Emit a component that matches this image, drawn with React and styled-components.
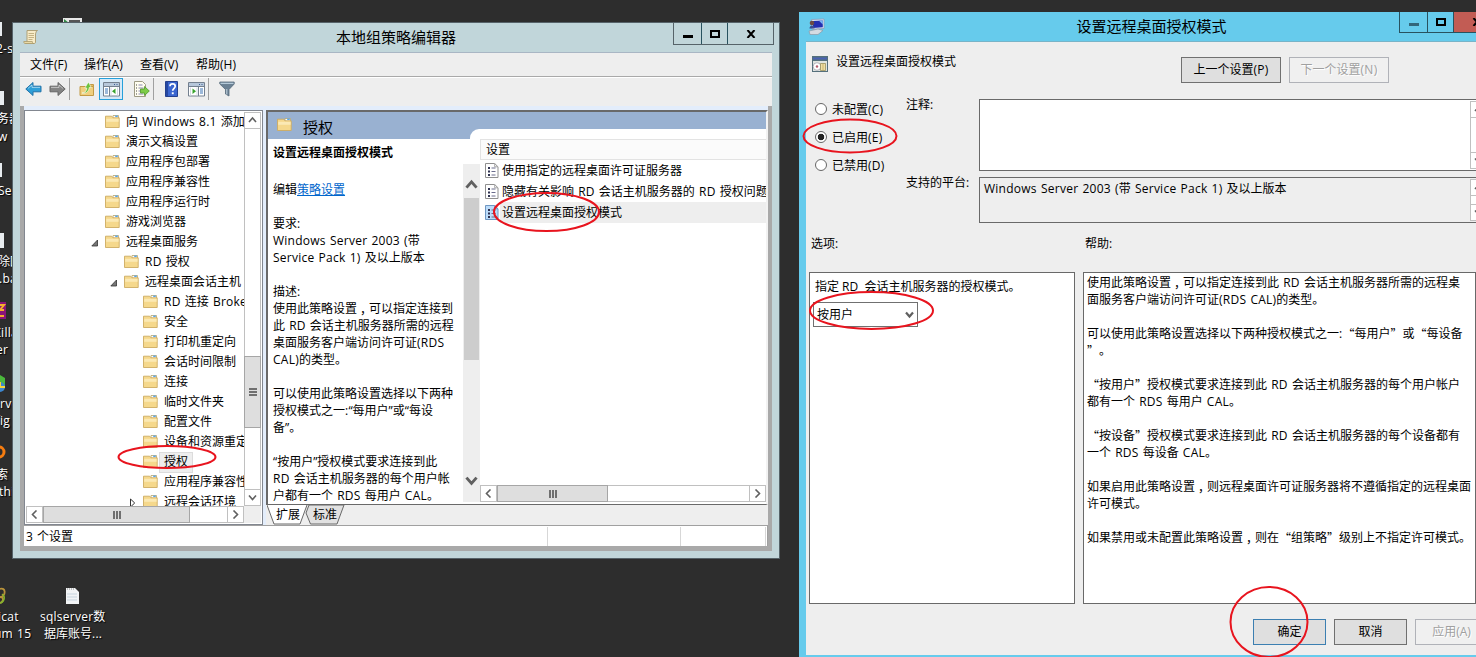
import React from "react";
import styled, { createGlobalStyle, css } from "styled-components";

const FONT = "\"Open Sans\", \"Noto Sans CJK SC\", sans-serif";

const GlobalStyle = createGlobalStyle`
* { box-sizing: border-box; }
body {
  margin: 0;
  overflow: hidden;
  background: #2d2d2d;
  font: 12px/17px ${ FONT };
  word-spacing: 1px;
  color: #000;
}
`;

/* ---------- data ---------- */

const MENUS = [ "文件(F)", "操作(A)", "查看(V)", "帮助(H)" ];

const TREE = [
  { level: 0, label: "向 Windows 8.1 添加功能" },
  { level: 0, label: "演示文稿设置" },
  { level: 0, label: "应用程序包部署" },
  { level: 0, label: "应用程序兼容性" },
  { level: 0, label: "应用程序运行时" },
  { level: 0, label: "游戏浏览器" },
  { level: 0, label: "远程桌面服务", arrow: "open" },
  { level: 1, label: "RD 授权" },
  { level: 1, label: "远程桌面会话主机", arrow: "open" },
  { level: 2, label: "RD 连接 Broker" },
  { level: 2, label: "安全" },
  { level: 2, label: "打印机重定向" },
  { level: 2, label: "会话时间限制" },
  { level: 2, label: "连接" },
  { level: 2, label: "临时文件夹" },
  { level: 2, label: "配置文件" },
  { level: 2, label: "设备和资源重定向" },
  { level: 2, label: "授权", selected: true },
  { level: 2, label: "应用程序兼容性" },
  { level: 2, label: "远程会话环境", arrow: "closed" },
];

const POLICIES = [
  { label: "使用指定的远程桌面许可证服务器" },
  { label: "隐藏有关影响 RD 会话主机服务器的 RD 授权问题" },
  { label: "设置远程桌面授权模式", selected: true },
];

const DESCRIPTION = [
  "要求:",
  "Windows Server 2003 (带",
  "Service Pack 1) 及以上版本",
  "",
  "描述:",
  "使用此策略设置，可以指定连接到",
  "此 RD 会话主机服务器所需的远程",
  "桌面服务客户端访问许可证(RDS",
  "CAL)的类型。",
  "",
  "可以使用此策略设置选择以下两种",
  "授权模式之一:“每用户”或“每设",
  "备”。",
  "",
  "“按用户”授权模式要求连接到此",
  "RD 会话主机服务器的每个用户帐",
  "户都有一个 RDS 每用户 CAL。",
];

const HELP = [
  "使用此策略设置，可以指定连接到此 RD 会话主机服务器所需的远程桌",
  "面服务客户端访问许可证(RDS CAL)的类型。",
  "",
  "可以使用此策略设置选择以下两种授权模式之一:“每用户”或“每设备",
  "”。",
  "",
  "“按用户”授权模式要求连接到此 RD 会话主机服务器的每个用户帐户",
  "都有一个 RDS 每用户 CAL。",
  "",
  "“按设备”授权模式要求连接到此 RD 会话主机服务器的每个设备都有",
  "一个 RDS 每设备 CAL。",
  "",
  "如果启用此策略设置，则远程桌面许可证服务器将不遵循指定的远程桌面",
  "许可模式。",
  "",
  "如果禁用或未配置此策略设置，则在“组策略”级别上不指定许可模式。",
];

const DESKTOP_LABELS = [
  { x: -4, y: 40, text: "2-s" },
  { x: -3, y: 110, text: "务器" },
  { x: -2, y: 128, text: "w ）" },
  { x: -2, y: 182, text: "Sea" },
  { x: -2, y: 253, text: "除回" },
  { x: -1, y: 270, text: ".bat" },
  { x: -6, y: 324, text: "Zilla" },
  { x: -4, y: 341, text: "er" },
  { x: -7, y: 395, text: "erver" },
  { x: -12, y: 412, text: "nfig" },
  { x: -4, y: 466, text: "索" },
  { x: -1, y: 483, text: "thi" },
  { x: -2, y: 608, text: "icat" },
  { x: -6, y: 625, text: "um 15" },
  { x: 40, y: 608, text: "sqlserver数" },
  { x: 44, y: 625, text: "据库账号..." },
];

const MARKS = [
  { cx: 167, cy: 457, rx: 48.5, ry: 11 },
  { cx: 546.5, cy: 212, rx: 52.5, ry: 19 },
  { cx: 850, cy: 136, rx: 46.5, ry: 16.5 },
  { cx: 871.5, cy: 310.5, rx: 61.5, ry: 18.5 },
  { cx: 1269, cy: 622, rx: 38.5, ry: 35 },
];

/* ---------- icons ---------- */

const FolderIcon = () => (
  <svg width="15" height="14" viewBox="0 0 15 14">
    <path d="M8 1.500h5.500v3H8z" fill="#fff" stroke="#b9a46a" strokeWidth=".8"/>
    <path d="M.5 2.200h6.200l1.300 1.600h6.200v9.700H.5z" fill="#f5d88c" stroke="#cdab62" strokeWidth=".9"/>
    <path d="M1.200 4.800h12.400v3H1.200z" fill="#fbe9b4"/>
    <path d="M10.200 1.500h2.600V3h-2.600z" fill="#5aa5e6"/>
  </svg>
);

const PolicyIcon = ( { selected } ) => (
  <svg width="14" height="15" viewBox="0 0 14 15">
    <path d="M.5.5h9.200l3.300 3.300v10.700H.5z" fill={ selected ? "#bcdcfa" : "#fff" }
          stroke={ selected ? "#6f97c2" : "#8f8f8f" }/>
    <path d="M9.700.5v3.300H13" fill="none" stroke={ selected ? "#6f97c2" : "#a5a5a5" }/>
    <path d="M3 4h2v2H3zM3 7.500h2v2H3zM3 11h2v2H3z" fill="#2f3250"/>
    <path d="M6.500 5h4M6.500 8.500h4M6.500 12h4" stroke="#6a6c8c"/>
  </svg>
);

const ArrowIcon = ( { flip, fill, stroke } ) => (
  <svg width="17" height="16" viewBox="0 0 17 16">
    <g transform={ flip ? "translate(17 0) scale(-1 1)" : undefined }>
      <path d="M.8 8l7.200-6.500v3.700h8v5.600H8v3.700z" fill={ fill } stroke={ stroke }/>
      <path d="M3 7.400l4-3.400v2.400h8" fill="none" stroke="#fff" strokeOpacity=".5"/>
    </g>
  </svg>
);

const FolderUpIcon = () => (
  <svg width="16" height="16" viewBox="0 0 16 16">
    <path d="M1 5.500h13.500v9H1z" fill="#f0cf7e" stroke="#c29a45"/>
    <path d="M9 3.500h5.500v2H9z" fill="#e3bd66" stroke="#c29a45"/>
    <path d="M3 12c3 0 4.500-2 4.800-5h-2L9.500 1l2.700 5.500h-2C10 10 7.500 13 3 12z" fill="#6dc23c" stroke="#fff"
          strokeWidth=".6"/>
  </svg>
);

const PaneIcon = ( { flip } ) => (
  <svg width="17" height="15" viewBox="0 0 17 15">
    <path d="M.5.5h16v13.500H.5z" fill="#fff" stroke="#74808f"/>
    <path d="M1 1h15v3H1z" fill="#b7c7da"/>
    <path d="M11 2.500h1M13.500 2.500h1" stroke="#3b5f94"/>
    <g transform={ flip ? "translate(17 0) scale(-1 1)" : undefined }>
      <path d="M1 4.500h15M6.500 5v9" stroke="#74808f"/>
      <path d="M2 7h3M2 9h3M2 11h3" stroke="#3b72b4"/>
      <path d="M12.500 6.500v5.500L9 9.200z" fill="#38a32d"/>
      <path d="M8 5.500v8M14.500 5.500v8" stroke="#d3dae3"/>
    </g>
  </svg>
);

const ExportIcon = () => (
  <svg width="17" height="16" viewBox="0 0 17 16">
    <path d="M1.500.5h8l3 3v12h-11z" fill="#fffdf0" stroke="#9d9a84"/>
    <path d="M3 4h1M3 7h1M3 10h1M3 13h1" stroke="#444"/>
    <path d="M5.500 4h4M5.500 7h5M5.500 10h3M5.500 13h5" stroke="#8888b5"/>
    <path d="M7.500 8h4V5.500L16.300 10l-4.800 4.500V12h-4z" fill="#7dcc48" stroke="#51982a" strokeWidth=".8"/>
  </svg>
);

const HelpIcon = () => (
  <svg width="14" height="16" viewBox="0 0 14 16">
    <path d="M.5.5h12v15H.5z" fill="#3b66d0" stroke="#24408e"/>
    <path d="M1 1h2v14H1z" fill="#2648a2"/>
    <path d="M5 5.200c0-3 5.200-3 5.200 0 0 2-2.500 2.200-2.500 4.600" fill="none" stroke="#fff" strokeWidth="1.700"/>
    <path d="M6.800 11.300h1.900v1.900H6.800z" fill="#fff"/>
  </svg>
);

const FunnelIcon = () => (
  <svg width="16" height="16" viewBox="0 0 16 16">
    <path d="M.8 1h14.400v2L10 8.500V15l-3.500-2V8.500L.8 3z" fill="#6b8194" stroke="#566a7b" strokeWidth=".8"/>
    <path d="M1.500 2.300h13" stroke="#c8dcea"/>
    <path d="M7.800 8v5.500" stroke="#c2d3df"/>
  </svg>
);

const ScrollDocIcon = () => (
  <svg width="16" height="16" viewBox="0 0 16 16">
    <path d="M4 1.500h10.500c-1.500 0-1.500 2.500-2 3.500v8c0 1-.5 1.500-1.500 1.500H2.500c1.500 0 1.500-1 1.500-2z" fill="#f8ecc8"
          stroke="#a99a6c" strokeWidth=".9"/>
    <path d="M.8 12.500h8.500c0 1 .5 2 1.500 2H2c-1 0-1.200-1-1.200-2z" fill="#e9d9a6" stroke="#a99a6c" strokeWidth=".8"/>
    <path d="M5.500 4.500h5.500M5.500 6.500h5.500M5.500 8.500h5.500M5.500 10.500h4" stroke="#b6a472" strokeWidth=".8"/>
  </svg>
);

const MonitorIcon = () => (
  <svg width="18" height="17" viewBox="0 0 18 17">
    <path d="M3.500 1.500L16 1v9.500l-12 .8z" fill="#dce6f4" stroke="#8b9cb8" strokeWidth=".8"/>
    <path d="M5 3l9.800-.5v6.800L5 10z" fill="#2330b0"/>
    <path d="M11 2.700l3.800-.2v4z" fill="#7ab4f4"/>
    <path d="M1 13l9-2 5 1.500-5 4H2z" fill="#d5dbe2" stroke="#8d99a6" strokeWidth=".7"/>
    <circle cx="4" cy="5" r="2.300" fill="#6c4b44"/>
    <path d="M1.500 10.500c0-4 5-4 5 0z" fill="#3a4f94"/>
  </svg>
);

const SettingIcon = () => (
  <svg width="16" height="16" viewBox="0 0 16 16">
    <path d="M0 0h16v16H0z" fill="#55707c"/>
    <path d="M1 1.500h14v2H1z" fill="#4a62b4"/>
    <path d="M1 5h14v10H1z" fill="#dfe4e0"/>
    <circle cx="5" cy="10.500" r="3.800" fill="#fff" stroke="#9a9aa8" strokeWidth=".7"/>
    <circle cx="5" cy="10.500" r="1.200" fill="#b45a6c"/>
    <path d="M8.500 7.500h5v7h-5z" fill="#fff4c0" stroke="#8e8248" strokeWidth=".7"/>
    <path d="M9.500 9h3M9.500 11h3M9.500 13h3" stroke="#a88c38" strokeWidth=".8"/>
  </svg>
);

const CHEVRONS = { up: "M1 6l3.500-4L8 6", down: "M1 2.500l3.500 4L8 2.500", left: "M6.500 .5L2.500 4.500l4 4", right: "M2.500 .5l4 4-4 4" };

const Chevron = ( { dir, size = 9, width = 1.6, color = "#606060" } ) => (
  <svg width={ size } height={ size } viewBox="0 0 9 9">
    <path d={ CHEVRONS[ dir ] } fill="none" stroke={ color } strokeWidth={ width }/>
  </svg>
);

/* ---------- shared parts ---------- */

const Latin = styled.span`
letter-spacing: .25px;
`;

const WideMark = styled.span`
display: inline-block;
width: 12px;
height: 17px;
vertical-align: top;
font-family: "Noto Sans CJK SC", sans-serif;
text-indent: ${ ( { shift } ) => shift || 0 }px;
`;

const TextLine = styled.div`
height: 17px;
white-space: pre;
`;

/**
 * spaceLatin
 * @description Latin runs are set a little wider than the characters around them.
 */
const spaceLatin = ( text ) => text.split( /([!-~]+)/ ).map( ( part, i ) => (
  i % 2 ? <Latin key={ i }>{ part }</Latin> : part
) );

/**
 * Lines
 * @description Draws text that is already broken in lines. Wide quotes take a full cell.
 */
const Lines = ( { lines, wideQuotes } ) => lines.map( ( line, i ) => (
  <TextLine key={ i }>
    { line.split( wideQuotes ? /([，“”])/ : /(，)/ ).map( ( part, j ) => {
      if( part === "，" ){
        return <WideMark key={ j } shift={ 3 }>{ part }</WideMark>;
      }
      return part === "“" || part === "”"
        ? <WideMark key={ j }>{ part }</WideMark>
        : <React.Fragment key={ j }>{ spaceLatin( part ) }</React.Fragment>;
    } ) }
  </TextLine>
) );

const ScrollTrack = styled.div`
display: flex;
flex: none;
background: #fff;
border: 1px solid #c0c0c0;
${ ( { horizontal } ) => horizontal ? css`
height: 17px;
` : css`
flex-direction: column;
width: 17px;
` }
`;

const ScrollButton = styled.div`
display: flex;
flex: none;
align-items: center;
justify-content: center;
width: ${ ( { horizontal } ) => horizontal ? 16 : 15 }px;
height: ${ ( { horizontal } ) => horizontal ? 15 : 16 }px;
border: 0 solid #c0c0c0;
border-${ ( { edge } ) => edge }-width: 1px;
`;

const ScrollGap = styled.div`
flex: ${ ( { size } ) => size === undefined ? "1" : `0 0 ${ size }px` };
`;

const ScrollThumb = styled.div`
display: flex;
flex: 0 0 ${ ( { size } ) => size }px;
align-items: center;
justify-content: center;
margin: ${ ( { horizontal } ) => horizontal ? "-1px 0" : "0 -1px" };
background: #dedede;
border: 1px solid #a6a6a6;
`;

const Grip = styled.span`
width: 8px;
height: 8px;
background: repeating-linear-gradient(${ ( { horizontal } ) => horizontal ? "90deg" : "180deg" }, #707070 0 2px, transparent 2px 3px);
`;

const ScrollBar = ( { horizontal, offset, thumb, className } ) => (
  <ScrollTrack horizontal={ horizontal } className={ className }>
    <ScrollButton horizontal={ horizontal } edge={ horizontal ? "right" : "bottom" }>
      <Chevron dir={ horizontal ? "left" : "up" }/>
    </ScrollButton>
    { thumb && <><ScrollGap size={ offset }/><ScrollThumb horizontal={ horizontal } size={ thumb }>
      <Grip horizontal={ horizontal }/></ScrollThumb></> }
    <ScrollGap/>
    <ScrollButton horizontal={ horizontal } edge={ horizontal ? "left" : "top" }>
      <Chevron dir={ horizontal ? "right" : "down" }/>
    </ScrollButton>
  </ScrollTrack>
);

const CaptionButtons = styled.div`
display: flex;
height: ${ ( { tall } ) => tall ? 22 : 21 }px;
border: solid ${ ( { line } ) => line };
border-width: 0 1px 1px;
`;

const CaptionButton = styled.div`
display: flex;
align-items: center;
justify-content: center;
width: ${ ( { size } ) => size }px;
background: ${ ( { fill } ) => fill || "transparent" };
& + & { border-left: 1px solid ${ ( { line } ) => line }; }
`;

const Caption = ( { line, dim, closeFill, tall } ) => (
  <CaptionButtons line={ line } tall={ tall }>
    <CaptionButton size={ 27 } line={ line }>
      <svg width="10" height="10"><path d="M0 6h10v3H0z" fill={ dim ? "#33667a" : "#000" }/></svg>
    </CaptionButton>
    <CaptionButton size={ 26 } line={ line }>
      <svg width="10" height="8"><path d="M1 1h8v6H1z" fill="none" stroke="#000" strokeWidth="2"/></svg>
    </CaptionButton>
    <CaptionButton size={ 46 } line={ line } fill={ closeFill }>
      <svg width="10" height="8"><path d="M1.500 0l7 8M8.500 0l-7 8" stroke="#000" strokeWidth="2"/></svg>
    </CaptionButton>
  </CaptionButtons>
);

const WindowTitle = styled.div`
flex: 1;
padding: 3px 0 0 76px;
text-align: center;
font-size: 15px;
line-height: 22px;
`;

/* ---------- policy editor window ---------- */

const EditorWindow = styled.div`
position: absolute;
left: 12px;
top: 22px;
display: flex;
flex-direction: column;
width: 768px;
height: 537px;
padding: 0 7px 7px;
background: #c1d6da;
border: 1px solid #566369;
`;

const EditorTitleBar = styled.div`
display: flex;
flex: none;
height: 29px;
margin-right: -2px;
padding-left: 3px;
svg { flex: none; }
`;

const TitleIcon = styled.span`
width: 20px;
padding-top: ${ ( { drop } ) => drop }px;
`;

const EditorClient = styled.div`
display: flex;
flex: 1;
flex-direction: column;
min-height: 0;
background: #eee;
border-top: 1px solid #a9b6c4;
`;

const MenuBar = styled.div`
display: flex;
flex: none;
gap: 16px;
height: 24px;
padding: 3px 10px;
border-bottom: 1px solid #a9a9a9;
`;

const MenuItem = styled.span`
width: 40px;
white-space: nowrap;
&:first-child { width: 38px; }
`;

const ToolBar = styled.div`
display: flex;
flex: none;
align-items: center;
height: 29px;
padding: 0 4px 6px 1px;
border-top: 1px solid #fff;
`;

const Tool = styled.span`
display: flex;
flex: none;
align-items: center;
justify-content: center;
width: 24px;
height: 22px;
margin-right: ${ ( { after } ) => after || 0 }px;
${ ( { active } ) => active && css`
background: #d5e8f7;
border: 1px solid #26a0da;
` }
`;

const ToolDivider = styled.span`
width: 1px;
height: 22px;
margin-right: ${ ( { after } ) => after }px;
background: #a0a0a0;
`;

const Frame = styled.div`
display: flex;
flex: 1;
flex-direction: column;
min-height: 0;
border: solid #a9a9a9;
border-width: 0 4px 5px;
`;

const Panes = styled.div`
display: flex;
gap: 3px;
height: 419px;
padding-top: 4px;
background: #e3edfb;
`;

const TreePane = styled.div`
display: flex;
flex-direction: column;
width: 239px;
padding: 1px;
background: #fff;
border: 1px solid #828790;
`;

const TreeBody = styled.div`
display: flex;
height: 394px;
`;

const TreeList = styled.div`
width: 218px;
overflow: hidden;
`;

const TreeRow = styled.div`
display: flex;
align-items: center;
height: 20px;
padding-left: ${ ( { level } ) => 65 + level * 19 }px;
white-space: nowrap;
svg { flex: none; margin-top: -2px; }
`;

const TreeArrow = styled.span`
display: flex;
flex: none;
width: 14px;
svg { margin-top: 1px; }
`;

const TreeLabel = styled.span`
padding: 0 4px 1px;
margin-left: 2px;
line-height: 18px;
${ ( { selected } ) => selected && css`
background: #eee;
box-shadow: 0 0 0 1px #dcdcdc;
` }
`;

const TreeFoot = styled.div`
display: flex;
background: #eee;
`;

const TreeScroll = styled( ScrollBar )`
width: 218px;
`;

const DetailPane = styled.div`
display: flex;
flex: 1;
flex-direction: column;
min-width: 0;
background: #eee;
`;

const DetailFrame = styled.div`
display: flex;
flex-direction: column;
height: 395px;
background: #99b1d1;
border: solid #696969;
border-width: 2px 2px 1px;
border-right-color: #f2f2f2;
`;

const DetailHeader = styled.div`
display: flex;
flex: none;
gap: 11px;
height: 27px;
padding: 5px 9px;
font-size: 15px;
line-height: 20px;
`;

const DetailColumns = styled.div`
display: flex;
height: 365px;
background: #fff;
`;

const DescriptionColumn = styled.div`
flex: none;
width: 195px;
height: 363px;
padding: 5px 5px 0;
overflow: hidden;
`;

const PolicyName = styled.div`
margin-bottom: 20px;
font-weight: 700;
`;

const EditLine = styled.div`
margin-bottom: 17px;
a { color: #0066cc; text-decoration: underline; }
`;

const FlatScroll = styled.div`
display: flex;
flex: none;
flex-direction: column;
align-items: center;
justify-content: space-between;
width: 17px;
height: 338px;
margin-top: 25px;
padding: 15px 1px;
background: #eee;
`;

const FlatThumb = styled.div`
width: 15px;
height: 162px;
margin: 6px 0 auto;
background: #cdcdcd;
`;

const ListColumn = styled.div`
display: flex;
flex: 1;
flex-direction: column;
min-width: 0;
height: 373px;
margin-top: -10px;
`;

const ListCap = styled.div`
flex: none;
height: 10px;
margin-left: -10px;
background: #fff;
border-top-left-radius: 9px;
`;

const ListHeader = styled.div`
flex: none;
height: 21px;
padding: 1px 5px;
background: #fbfbfb;
border: 1px solid #e3e3e3;
border-right: 0;
`;

const PolicyRow = styled.div`
display: flex;
flex: none;
align-items: center;
height: 21px;
padding-left: 5px;
overflow: hidden;
white-space: nowrap;
svg { flex: none; }
`;

const PolicyLabel = styled.span`
flex: 1;
margin-left: 1px;
padding: 2px 0 2px 2px;
background: ${ ( { selected } ) => selected ? "#eee" : "transparent" };
`;

const ListScroll = styled( ScrollBar )`
margin-top: auto;
`;

const TabStrip = styled.div`
display: flex;
height: 20px;
padding-left: 1px;
`;

const Tab = styled.span`
display: grid;
width: 37px;
svg, span { grid-area: 1 / 1; }
span { z-index: 1; padding: 1px 0 0 9px; white-space: nowrap; }
`;

const StatusBar = styled.div`
display: flex;
height: 21px;
background: #fff;
border: solid #a0a0a0;
border-width: 1px 1px 0 0;
`;

const StatusCell = styled.div`
width: ${ ( { size } ) => size }px;
height: 19px;
margin-top: 1px;
padding: 1px 0 0 2px;
border-right: 1px solid #d7d7d7;
`;

const PolicyEditor = () => (
  <EditorWindow>
    <EditorTitleBar>
      <TitleIcon drop={ 6 }><ScrollDocIcon/></TitleIcon>
      <WindowTitle>本地组策略编辑器</WindowTitle>
      <Caption line="#566369" tall/>
    </EditorTitleBar>
    <EditorClient>
      <MenuBar>{ MENUS.map( menu => <MenuItem key={ menu }>{ menu }</MenuItem> ) }</MenuBar>
      <ToolBar>
        <Tool><ArrowIcon fill="#2f9fd8" stroke="#2372a8"/></Tool>
        <Tool><ArrowIcon flip fill="#848484" stroke="#666"/></Tool>
        <ToolDivider after={ 5 }/>
        <Tool><FolderUpIcon/></Tool>
        <Tool active after={ 6 }><PaneIcon/></Tool>
        <Tool><ExportIcon/></Tool>
        <ToolDivider after={ 6 }/>
        <Tool><HelpIcon/></Tool>
        <Tool><PaneIcon flip/></Tool>
        <ToolDivider after={ 6 }/>
        <Tool><FunnelIcon/></Tool>
      </ToolBar>
      <Frame>
        <Panes>
          <TreePane>
            <TreeBody>
              <TreeList>
                { TREE.map( ( row, i ) => (
                  <TreeRow key={ i } level={ row.level }>
                    <TreeArrow>
                      { row.arrow === "open" && <svg width="8" height="8">
                        <path d="M6.500 1v6H.8z" fill="#777" stroke="#333" strokeWidth=".8"/></svg> }
                      { row.arrow === "closed" && <svg width="8" height="10">
                        <path d="M1.500 1l4.200 4-4.200 4z" fill="#fff" stroke="#333"/></svg> }
                    </TreeArrow>
                    <FolderIcon/>
                    <TreeLabel selected={ row.selected }>{ spaceLatin( row.label ) }</TreeLabel>
                  </TreeRow>
                ) ) }
              </TreeList>
              <ScrollBar offset={ 227 } thumb={ 72 }/>
            </TreeBody>
            <TreeFoot><TreeScroll horizontal offset={ 0 } thumb={ 147 }/></TreeFoot>
          </TreePane>
          <DetailPane>
            <DetailFrame>
              <DetailHeader><FolderIcon/>授权</DetailHeader>
              <DetailColumns>
                <DescriptionColumn>
                  <PolicyName>设置远程桌面授权模式</PolicyName>
                  <EditLine>编辑<a>策略设置</a></EditLine>
                  <Lines lines={ DESCRIPTION }/>
                </DescriptionColumn>
                <FlatScroll>
                  <Chevron dir="up" size={ 13 } width={ 2 }/>
                  <FlatThumb/>
                  <Chevron dir="down" size={ 13 } width={ 2 }/>
                </FlatScroll>
                <ListColumn>
                  <ListCap/>
                  <ListHeader>设置</ListHeader>
                  { POLICIES.map( policy => (
                    <PolicyRow key={ policy.label }>
                      <PolicyIcon selected={ policy.selected }/>
                      <PolicyLabel selected={ policy.selected }>{ spaceLatin( policy.label ) }</PolicyLabel>
                    </PolicyRow>
                  ) ) }
                  <ListScroll horizontal offset={ 0 } thumb={ 111 }/>
                </ListColumn>
              </DetailColumns>
            </DetailFrame>
            <TabStrip>
              <Tab>
                <svg width="42" height="20"><path d="M0 0l7 19h26l7-19" fill="#fff" stroke="#696969"/></svg>
                <span>扩展</span>
              </Tab>
              <Tab>
                <svg width="42" height="20">
                  <path d="M2 8l3-8h35l-7 19H6.500L2 8" fill="#e1e1e1" stroke="#696969"/></svg>
                <span>标准</span>
              </Tab>
            </TabStrip>
          </DetailPane>
        </Panes>
        <StatusBar>
          <StatusCell size={ 524 }>3 个设置</StatusCell>
          <StatusCell size={ 133 }/>
          <StatusCell size={ 85 }/>
        </StatusBar>
      </Frame>
    </EditorClient>
  </EditorWindow>
);

/* ---------- setting dialog ---------- */

const DialogWindow = styled.div`
position: absolute;
left: 799px;
top: 12px;
display: flex;
flex-direction: column;
width: 706px;
height: 651px;
padding: 0 7px 8px;
background: #66cbec;
`;

const DialogTitleBar = styled.div`
display: flex;
flex: none;
height: 29px;
margin-right: -2px;
padding-left: 2px;
`;

const DialogClient = styled.div`
display: flex;
flex: 1;
flex-direction: column;
background: #eee;
border-top: 1px solid #78b4c8;
`;

const DialogHead = styled.div`
display: flex;
height: 57px;
padding: 14px 6px 0;
`;

const DialogName = styled.span`
flex: none;
width: 345px;
margin: -3px 0 0 8px;
`;

const Button = styled.div`
flex: none;
width: ${ ( { size } ) => size }px;
height: 26px;
margin: 1px 8px 0 0;
text-align: center;
line-height: 24px;
white-space: nowrap;
background: #dfdfdf;
border: 1px solid ${ ( { primary } ) => primary ? "#3c7fb1" : "#707070" };
${ ( { disabled } ) => disabled && css`
color: #a0a0a0;
background: #f0f0f0;
border-color: #b0b2b8;
text-shadow: 1px 1px 0 #fff;
` }
`;

const StateRow = styled.div`
display: flex;
height: 133px;
padding-left: 9px;
`;

const Radios = styled.div`
display: flex;
flex: none;
flex-direction: column;
gap: 11px;
width: 91px;
padding-top: 2px;
`;

const Radio = styled.div`
display: flex;
align-items: center;
height: 17px;
`;

const RadioDot = styled.span`
width: 12px;
height: 12px;
margin: -1px 5px 0 0;
background: ${ ( { checked } ) => checked ? "radial-gradient(circle, #222 0 3px, #fff 3.6px)" : "#fff" };
border: 1px solid #666;
border-radius: 50%;
`;

const Fields = styled.div`
display: grid;
grid-template: 72px 46px / 73px 510px;
row-gap: 6px;
`;

const FieldLabel = styled.span`
margin-top: -3px;
`;

const FieldBox = styled.div`
display: flex;
justify-content: space-between;
padding: 1px 1px 1px 4px;
background: ${ ( { readOnly } ) => readOnly ? "#eee" : "#fff" };
border: 1px solid #696969;
line-height: 19px;
`;

const Sections = styled.div`
display: grid;
grid-template: 40px 332px / 266px 393px;
column-gap: 8px;
padding-left: 3px;
`;

const SectionTitle = styled.span`
padding: 3px 2px 0;
`;

const OptionBox = styled.div`
padding: 5px 3px;
background: #fff;
border: 1px solid #696969;
`;

const OptionName = styled.div`
padding-left: 2px;
word-spacing: 0;
white-space: pre;
`;

const Select = styled.div`
display: flex;
align-items: center;
justify-content: space-between;
width: 105px;
height: 25px;
margin-top: 7px;
padding: 0 3px;
border: 1px solid #707070;
`;

const HelpBox = styled.div`
padding: 1px 3px;
background: #fff;
border: 1px solid #696969;
`;

const DialogFoot = styled.div`
display: flex;
padding: 14px 0 0 447px;
`;

const SettingDialog = () => (
  <DialogWindow>
    <DialogTitleBar>
      <TitleIcon drop={ 6 }><MonitorIcon/></TitleIcon>
      <WindowTitle>设置远程桌面授权模式</WindowTitle>
      <Caption line="#28525f" dim closeFill="#c25c54"/>
    </DialogTitleBar>
    <DialogClient>
      <DialogHead>
        <SettingIcon/>
        <DialogName>设置远程桌面授权模式</DialogName>
        <Button size={ 100 }>上一个设置{ spaceLatin( "(P)" ) }</Button>
        <Button size={ 100 } disabled>下一个设置{ spaceLatin( "(N)" ) }</Button>
      </DialogHead>
      <StateRow>
        <Radios>
          <Radio><RadioDot/>未配置<Latin>(C)</Latin></Radio>
          <Radio><RadioDot checked/>已启用<Latin>(E)</Latin></Radio>
          <Radio><RadioDot/>已禁用<Latin>(D)</Latin></Radio>
        </Radios>
        <Fields>
          <FieldLabel>注释:</FieldLabel>
          <FieldBox><span/><ScrollBar/></FieldBox>
          <FieldLabel>支持的平台:</FieldLabel>
          <FieldBox readOnly>
            <span>{ spaceLatin( "Windows Server 2003 (带 Service Pack 1) 及以上版本" ) }</span>
            <ScrollBar/>
          </FieldBox>
        </Fields>
      </StateRow>
      <Sections>
        <SectionTitle>选项:</SectionTitle>
        <SectionTitle>帮助:</SectionTitle>
        <OptionBox>
          <OptionName>指定 RD  会话主机服务器的授权模式。</OptionName>
          <Select>按用户<Chevron dir="down" width={ 2.2 }/></Select>
        </OptionBox>
        <HelpBox><Lines lines={ HELP } wideQuotes/></HelpBox>
      </Sections>
      <DialogFoot>
        <Button size={ 73 } primary>确定</Button>
        <Button size={ 73 }>取消</Button>
        <Button size={ 73 } disabled>应用(A)</Button>
      </DialogFoot>
    </DialogClient>
  </DialogWindow>
);

/* ---------- desktop ---------- */

const Desktop = styled.div`
position: relative;
width: 1476px;
height: 657px;
overflow: hidden;
background: #2d2d2d;
`;

const DesktopIcons = styled.svg`
position: absolute;
left: 0;
top: 0;
`;

const DesktopLabel = styled.span`
position: absolute;
left: ${ ( { x } ) => x }px;
top: ${ ( { y } ) => y }px;
color: #fff;
white-space: pre;
text-shadow: 1px 1px 1px #000;
`;

const Marks = styled.svg`
position: absolute;
left: 0;
top: 0;
pointer-events: none;
`;

export default function App(){
  return (
    <>
      <GlobalStyle/>
      <Desktop>
        <DesktopIcons width="120" height="657">
          <path d="M0 22h2v14H0zM0 91h4v14H0zM0 163h2v14H0zM0 233h4v15H0z" fill="#e8ecef"/>
          <path d="M63 18h19v6H63z" fill="#e8e8e8"/>
          <path d="M64 19l5 4h-5z" fill="#2f8a45"/>
          <path d="M69 20h11v3H69z" fill="#555"/>
          <path d="M0 302h6v17H0z" fill="#8a1478"/>
          <path d="M0 305h4l-4 5h4M0 316h4" fill="none" stroke="#f4b02c" strokeWidth="2"/>
          <path d="M0 375l5 3v8H0z" fill="#4bb83c"/>
          <circle cx="0" cy="387" r="5" fill="#3d87cf"/>
          <path d="M0 382v5h5" fill="none" stroke="#f5d63b" strokeWidth="2"/>
          <circle cx="-1" cy="452" r="5" fill="none" stroke="#f57c10" strokeWidth="3"/>
          <path d="M0 589c6-2 6 6 1 8M0 597c5 0 3 6-1 6" fill="none" stroke="#b8923a" strokeWidth="1.800"/>
          <path d="M2 594c4 3 2 8-2 9" fill="none" stroke="#86b52c" strokeWidth="1.500"/>
          <path d="M66 588h9l4 4v12H66z" fill="#f2f4f6"/>
          <path d="M67 589h8" stroke="#888" strokeDasharray="1 1"/>
          <path d="M67 594h10M67 597h10M67 600h10" stroke="#c7d4df"/>
        </DesktopIcons>
        { DESKTOP_LABELS.map( label => (
          <DesktopLabel key={ label.y + label.text } x={ label.x } y={ label.y }>
            { spaceLatin( label.text ) }
          </DesktopLabel>
        ) ) }
        <PolicyEditor/>
        <SettingDialog/>
        <Marks width="1476" height="657">
          { MARKS.map( mark => (
            <ellipse key={ mark.cx } { ...mark } fill="none" stroke="#e8141e" strokeWidth="2"/>
          ) ) }
        </Marks>
      </Desktop>
    </>
  );
}
